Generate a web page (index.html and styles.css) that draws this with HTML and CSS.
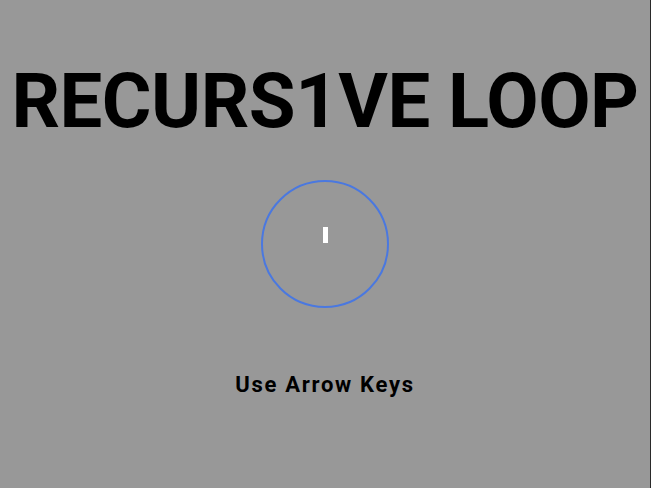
FILE: index.html
```html
<!DOCTYPE html>
<html>
<head>
<meta charset="utf-8">
<link rel="stylesheet" href="styles.css">
</head>
<body>
<div class="stage">
  <h1 class="title">RECURS1VE LOOP</h1>
  <div class="ring"><div class="cursor"></div></div>
  <p class="hint">Use Arrow Keys</p>
</div>
</body>
</html>
```
FILE: styles.css
```css
html, body {
  margin: 0;
  padding: 0;
  background: #ffffff;
}
.stage {
  width: 650px;
  height: 488px;
  background: #989898;
  border-right: 1px solid #2a2a2a;
  display: flex;
  flex-direction: column;
  align-items: center;
  font-family: Roboto, "Liberation Sans", sans-serif;
  color: #000;
}
.title {
  margin: 63px 0 0 0;
  font-size: 76px;
  line-height: 1;
  font-weight: 700;
  letter-spacing: -0.5px;
  white-space: nowrap;
}
.ring {
  margin-top: 41px;
  width: 124px;
  height: 124px;
  border: 2px solid #4a78e0;
  border-radius: 50%;
  display: flex;
  align-items: center;
  justify-content: center;
}
.cursor {
  width: 5px;
  height: 16px;
  background: #ffffff;
  margin-bottom: 18px;
}
.hint {
  margin: 66px 0 0 0;
  font-size: 22px;
  line-height: 1;
  font-weight: 700;
  letter-spacing: 1.7px;
}
```
